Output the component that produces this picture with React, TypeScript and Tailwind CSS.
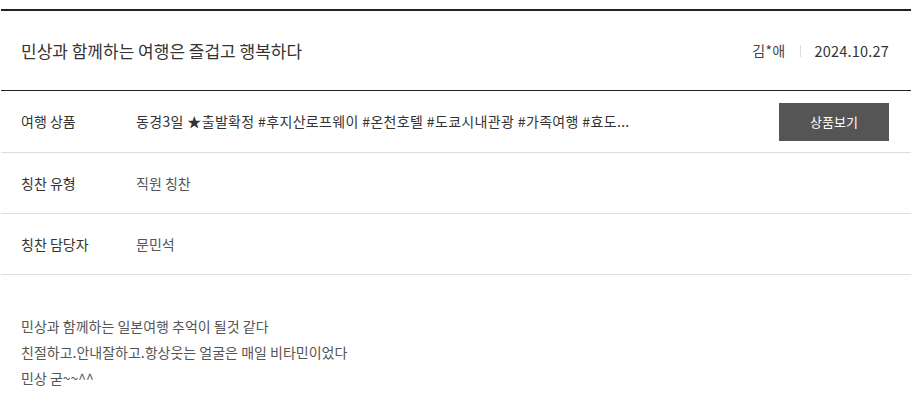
import React from "react";

const font = { fontFamily: '"Noto Sans CJK KR", "Noto Sans", sans-serif' };

function Row({ label, children, right, h }: { label: string; children: React.ReactNode; right?: React.ReactNode; h: string }) {
  return (
    <div className={`flex items-center border-b border-[#dddddd] pl-5 pr-[22px] ${h}`}>
      <div className="w-[115px] shrink-0 text-[14px] text-[#333333]">{label}</div>
      <div className="min-w-0 flex-1 truncate text-[14px] text-[#555555]">{children}</div>
      {right}
    </div>
  );
}

export default function App() {
  return (
    <div className="bg-white pt-[9px]" style={font}>
      <div className="ml-px w-[910px]">
        <div className="flex h-[82px] items-center justify-between border-t-2 border-b border-t-[#222222] border-b-[#222222] pl-5 pr-[22px]">
          <div className="text-[17px] text-[#333333]">민상과 함께하는 여행은 즐겁고 행복하다</div>
          <div className="flex items-center text-[14px] text-[#444444]">
            <span className="tracking-[0.3px]">김*애</span>
            <span className="mx-[14px] h-[12px] w-px bg-[#dddddd]" />
            <span className="text-[14.5px] tracking-[0.2px] text-[#333333]">2024.10.27</span>
          </div>
        </div>
        <Row
          h="h-[62px]"
          label="여행 상품"
          right={
            <button className="ml-4 flex h-[38px] w-[110px] shrink-0 items-center justify-center bg-[#555555] text-[13px] text-white">
              상품보기
            </button>
          }
        >
          <span className="tracking-[0.35px] text-[#333333]">동경3일 ★출발확정 #후지산로프웨이 #온천호텔 #도쿄시내관광 #가족여행 #효도...</span>
        </Row>
        <Row h="h-[61px]" label="칭찬 유형">직원 칭찬</Row>
        <Row h="h-[61px]" label="칭찬 담당자">문민석</Row>
        <div className="px-5 pt-[38px] text-[14px] leading-[26px] text-[#555555]">
          <p>민상과 함께하는 일본여행 추억이 될것 같다</p>
          <p>친절하고.안내잘하고.항상웃는 얼굴은 매일 비타민이었다</p>
          <p>민상 굳~~^^</p>
        </div>
      </div>
    </div>
  );
}
